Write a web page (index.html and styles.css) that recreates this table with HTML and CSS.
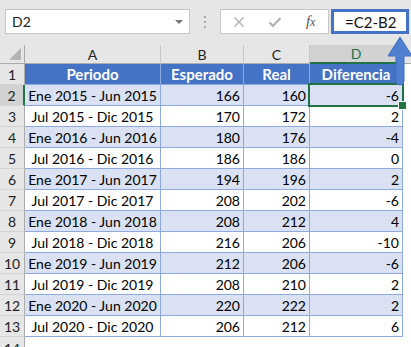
FILE: index.html
```html
<!DOCTYPE html>
<html lang="es">
<head>
<meta charset="utf-8">
<title>Diferencia</title>
<link rel="stylesheet" href="styles.css">
</head>
<body>
<div class="toolbar">
  <div class="namebox"><span>D2</span><span class="caret"></span></div>
  <div class="sep"><svg width="4" height="14" viewBox="0 0 4 14"><rect x="1" y="1" width="2" height="2" fill="#a9a9a9"/><rect x="1" y="6" width="2" height="2" fill="#a9a9a9"/><rect x="1" y="11" width="2" height="2" fill="#a9a9a9"/></svg></div>
  <div class="fxbox">
    <span class="slot s1"><svg width="12" height="12" viewBox="0 0 12 12"><path d="M1.5 1.5 L10.5 10.5 M10.5 1.5 L1.5 10.5" stroke="#b0b0b0" stroke-width="1.4" fill="none"/></svg></span>
    <span class="slot s2"><svg width="14" height="12" viewBox="0 0 14 12"><path d="M1.5 6.5 L5 10 L12.5 2" stroke="#b0b0b0" stroke-width="2.2" fill="none"/></svg></span>
    <span class="slot s3"><span class="fx">f<span class="fxx">x</span></span></span>
  </div>
  <div class="formula">=C2-B2</div>
</div>

<div class="sheet">
  <div class="corner"><span class="tri"></span></div>
  <div class="ch">A</div><div class="ch">B</div><div class="ch">C</div><div class="ch chsel">D</div><div class="ch last"></div>

  <div class="rh">1</div>
  <div class="c hd">Periodo</div><div class="c hd">Esperado</div><div class="c hd">Real</div><div class="c hd">Diferencia</div><div class="e"></div>

  <div class="rh rhsel">2</div>
  <div class="c band t">Ene 2015 - Jun 2015</div><div class="c band n">166</div><div class="c band n">160</div><div class="c band n sel">-6</div><div class="e"></div>

  <div class="rh">3</div>
  <div class="c t">Jul 2015 - Dic 2015</div><div class="c n">170</div><div class="c n">172</div><div class="c n">2</div><div class="e"></div>

  <div class="rh">4</div>
  <div class="c band t">Ene 2016 - Jun 2016</div><div class="c band n">180</div><div class="c band n">176</div><div class="c band n">-4</div><div class="e"></div>

  <div class="rh">5</div>
  <div class="c t">Jul 2016 - Dic 2016</div><div class="c n">186</div><div class="c n">186</div><div class="c n">0</div><div class="e"></div>

  <div class="rh">6</div>
  <div class="c band t">Ene 2017 - Jun 2017</div><div class="c band n">194</div><div class="c band n">196</div><div class="c band n">2</div><div class="e"></div>

  <div class="rh">7</div>
  <div class="c t">Jul 2017 - Dic 2017</div><div class="c n">208</div><div class="c n">202</div><div class="c n">-6</div><div class="e"></div>

  <div class="rh">8</div>
  <div class="c band t">Ene 2018 - Jun 2018</div><div class="c band n">208</div><div class="c band n">212</div><div class="c band n">4</div><div class="e"></div>

  <div class="rh">9</div>
  <div class="c t">Jul 2018 - Dic 2018</div><div class="c n">216</div><div class="c n">206</div><div class="c n">-10</div><div class="e"></div>

  <div class="rh">10</div>
  <div class="c band t">Ene 2019 - Jun 2019</div><div class="c band n">212</div><div class="c band n">206</div><div class="c band n">-6</div><div class="e"></div>

  <div class="rh">11</div>
  <div class="c t">Jul 2019 - Dic 2019</div><div class="c n">208</div><div class="c n">210</div><div class="c n">2</div><div class="e"></div>

  <div class="rh">12</div>
  <div class="c band t">Ene 2020 - Jun 2020</div><div class="c band n">220</div><div class="c band n">222</div><div class="c band n">2</div><div class="e"></div>

  <div class="rh">13</div>
  <div class="c t">Jul 2020 - Dic 2020</div><div class="c n">206</div><div class="c n">212</div><div class="c n">6</div><div class="e"></div>

  <div class="rh rh14">14</div>
  <div class="e"></div><div class="e"></div><div class="e"></div><div class="e"></div><div class="e"></div>
</div>

<svg class="arrow" width="28" height="54" viewBox="0 0 28 54"><path d="M14 2 L26 21 L18 21 L18 46 A4 4 0 0 1 10 46 L10 21 L2 21 Z" fill="#4f80cf" stroke="#3f6fc0" stroke-width="1"/></svg>
</body>
</html>
```

FILE: styles.css
```css
* { box-sizing: border-box; }
html, body { margin: 0; padding: 0; }
body {
  width: 411px;
  height: 347px;
  overflow: hidden;
  position: relative;
  background: #fff;
  font-family: Lato, "Noto Sans", sans-serif;
  color: #000;
}

.toolbar {
  height: 45px;
  background: #e6e6e6;
  display: flex;
  align-items: flex-start;
  padding: 9px 0 0 5px;
}
.namebox {
  width: 185px;
  height: 25px;
  background: #fff;
  border: 1px solid #c6c6c6;
  display: flex;
  align-items: center;
  justify-content: space-between;
  padding: 0 6px 0 6px;
  font-size: 14px;
  color: #222;
}
.caret {
  width: 0;
  height: 0;
  border-left: 4px solid transparent;
  border-right: 4px solid transparent;
  border-top: 4px solid #777;
}
.sep {
  width: 30px;
  height: 25px;
  display: flex;
  align-items: center;
  justify-content: center;
}
.fxbox {
  width: 109px;
  height: 25px;
  background: #fff;
  border: 1px solid #c6c6c6;
  display: flex;
  align-items: center;
}
.slot {
  height: 100%;
  display: flex;
  align-items: center;
  justify-content: center;
}
.s1 { width: 37px; }
.s2 { width: 36px; }
.s3 { width: 35px; }
.fx {
  font-family: "Liberation Serif", serif;
  font-style: italic;
  font-size: 15px;
  color: #555;
}
.fxx { font-size: 12px; }
.formula {
  margin-left: 2px;
  width: 78px;
  height: 25px;
  border: 3px solid #4472c4;
  background: #fff;
  font-size: 15px;
  color: #111;
  padding-left: 11px;
  display: flex;
  align-items: center;
}

.sheet {
  display: grid;
  grid-template-columns: 25px 136px 83px 66px 93px 8px;
  grid-template-rows: 19px repeat(13, 21px) 14px;
  font-size: 14px;
}
.corner {
  background: #e6e6e6;
  border-right: 1px solid #ababab;
  border-bottom: 1px solid #ababab;
  position: relative;
}
.tri {
  position: absolute;
  right: 3px;
  bottom: 3px;
  width: 0;
  height: 0;
  border-left: 12px solid transparent;
  border-bottom: 12px solid #b4b4b4;
}
.ch {
  background: #e6e6e6;
  border-right: 1px solid #c6c6c6;
  border-bottom: 1px solid #ababab;
  display: flex;
  align-items: center;
  justify-content: center;
  font-size: 14px;
  color: #222;
}
.ch.chsel {
  background: #d2d2d2;
  border-bottom: 2px solid #217346;
  color: #217346;
}
.ch.last { border-right: none; }
.rh {
  background: #e6e6e6;
  border-right: 1px solid #ababab;
  border-bottom: 1px solid #d4d4d4;
  display: flex;
  align-items: center;
  justify-content: center;
  font-size: 14px;
  color: #222;
}
.rh.rh14 { align-items: flex-start; padding-top: 3px; }
.rh.rhsel {
  background: #d2d2d2;
  border-right: 2px solid #217346;
}
.c {
  border-right: 1px solid #8ea9db;
  border-bottom: 1px solid #8ea9db;
  display: flex;
  align-items: center;
  padding: 0 3px;
  white-space: nowrap;
}
.hd {
  background: #4472c4;
  color: #fff;
  font-weight: 700;
  font-size: 15px;
  justify-content: center;
}
.band { background: #d9e1f2; }
.t { justify-content: center; }
.n { justify-content: flex-end; }
.e { background: #fff; }
.sel { position: relative; }
.sel::after {
  content: "";
  position: absolute;
  left: -2px;
  top: -2px;
  right: -2px;
  bottom: -2px;
  border: 2px solid #217346;
}
.sel::before {
  content: "";
  position: absolute;
  right: -5px;
  bottom: -5px;
  width: 7px;
  height: 7px;
  background: #217346;
  border: 1px solid #fff;
  z-index: 2;
}

.arrow {
  position: absolute;
  left: 386px;
  top: 35px;
  z-index: 5;
}
```
